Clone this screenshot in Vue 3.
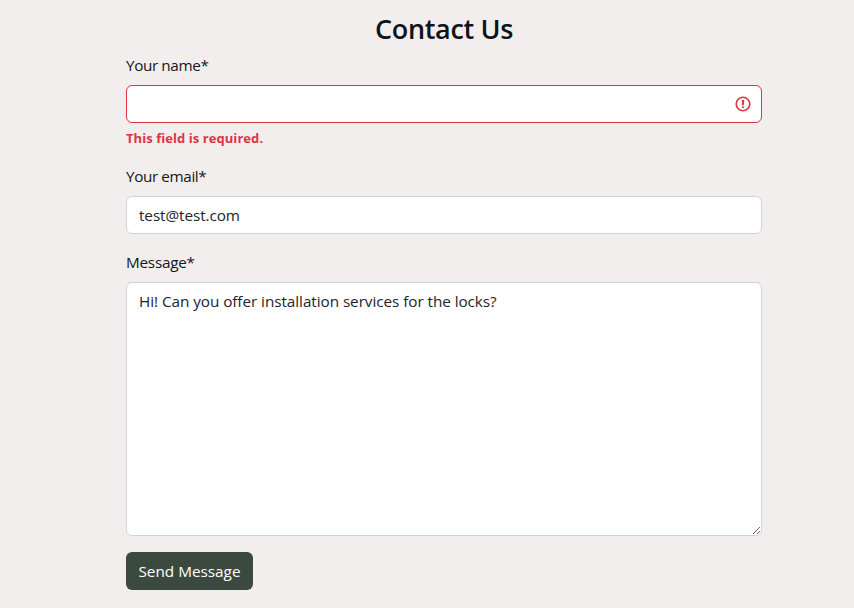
<script setup>
import { ref } from 'vue'

const name = ref('')
const email = ref('test@test.com')
const message = ref('Hi! Can you offer installation services for the locks?')
</script>

<template>
  <main class="contact">
    <h2 class="title">Contact Us</h2>
    <form novalidate @submit.prevent>
      <div class="field">
        <label for="name">Your name*</label>
        <div class="control invalid">
          <input id="name" v-model="name" type="text" />
          <svg class="alert" viewBox="0 0 12 12" width="18" height="18" fill="none" stroke="#dc3545">
            <circle cx="6" cy="6" r="4.5" stroke-width="1.1" />
            <path stroke-linejoin="round" stroke-width="1.2" d="M5.8 3.7h.4L6 6.4z" />
            <circle cx="6" cy="8.2" r=".7" fill="#dc3545" stroke="none" />
          </svg>
        </div>
        <p class="feedback"><span>This field is required.</span></p>
      </div>
      <div class="field">
        <label for="email">Your email*</label>
        <div class="control">
          <input id="email" v-model="email" class="email" type="text" />
        </div>
      </div>
      <div class="field">
        <label for="message" class="message-label">Message*</label>
        <textarea id="message" v-model="message" spellcheck="false"></textarea>
      </div>
      <button type="submit">Send Message</button>
    </form>
  </main>
</template>

<style>
body {
  margin: 0;
  background: #f2eeed;
}
</style>

<style scoped>
* {
  box-sizing: border-box;
}
.contact {
  width: 636px;
  margin-left: 126px;
  padding-top: 12px;
  color: #212529;
  font-family: "Segoe UI", "Open Sans", sans-serif;
  font-size: 15.3px;
  line-height: 24px;
}
.title {
  margin: 0 0 7px;
  color: #10131a;
  font-size: 27px;
  font-weight: 600;
  line-height: 34px;
  letter-spacing: -0.35px;
  text-align: center;
}
.field {
  margin-bottom: 16px;
}
label {
  display: block;
  width: fit-content;
  margin-bottom: 8px;
  color: #14171b;
  letter-spacing: -0.4px;
}
.message-label {
  letter-spacing: -0.25px;
}
.control {
  display: flex;
  align-items: center;
  height: 38px;
  padding: 0 9px 0 12px;
  border: 1px solid #ced4da;
  border-radius: 6px;
  background: #fff;
}
.invalid {
  border-color: #dc3545;
}
input {
  flex: 1;
  min-width: 0;
  padding: 0;
  border: 0;
  outline: 0;
  background: transparent;
  color: inherit;
  font: inherit;
  letter-spacing: -0.08px;
}
.feedback {
  margin: 5px 0 0;
  color: #dc3545;
  font-size: 13px;
  font-weight: 700;
  line-height: 20px;
  letter-spacing: 0.06px;
}
textarea {
  display: block;
  width: 100%;
  height: 254px;
  padding: 6px 12px;
  border: 1px solid #ced4da;
  border-radius: 6px;
  outline: 0;
  background: #fff;
  color: inherit;
  font: inherit;
  letter-spacing: -0.06px;
  resize: vertical;
}
button {
  display: block;
  width: 127px;
  height: 38px;
  padding: 0;
  border: 0;
  border-radius: 6px;
  background: #3c493f;
  color: #fff;
  font: inherit;
}
</style>
